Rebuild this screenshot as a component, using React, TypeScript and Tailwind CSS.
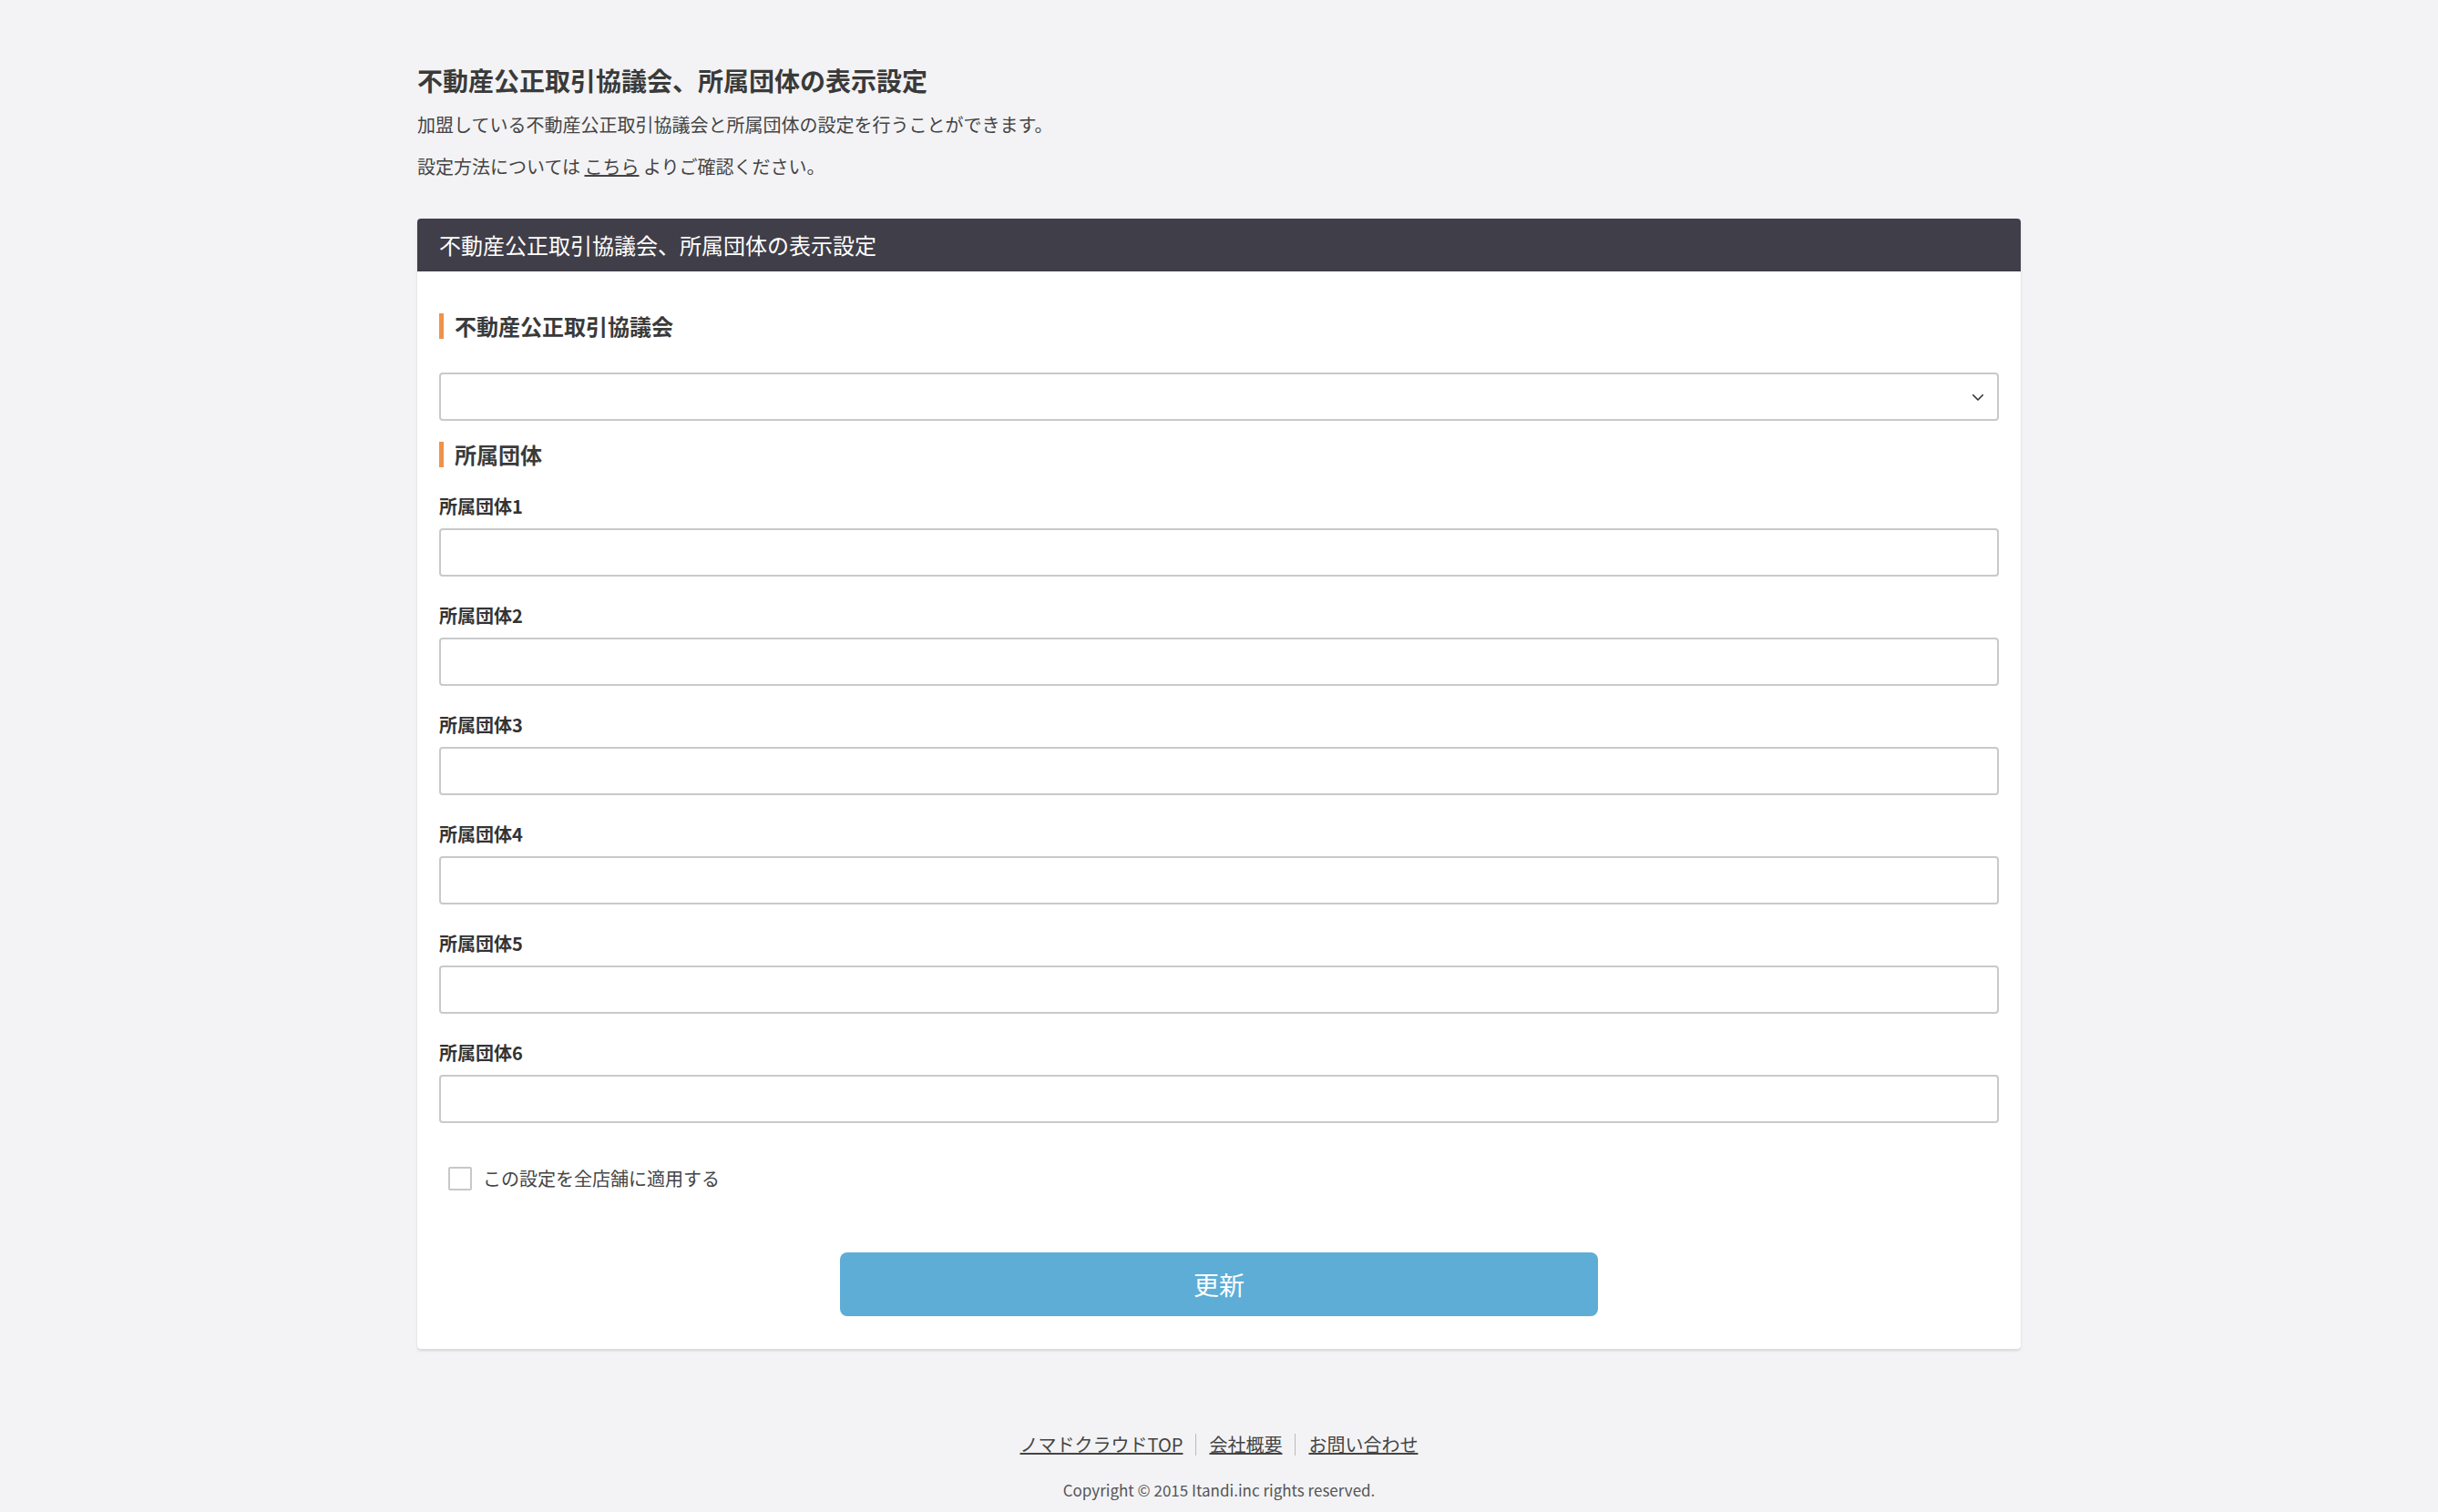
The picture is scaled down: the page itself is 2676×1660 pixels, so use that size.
const font = { fontFamily: '"Noto Sans CJK JP", "Noto Sans", sans-serif' }

function SectionHeading({ children }: { children: string }) {
  return (
    <div className="flex items-center gap-[12px] h-[30px]">
      <span className="w-[5px] h-[28px] bg-[#f0924a]" />
      <h3 className="text-[24px] font-bold text-[#3a3a3a] leading-none">{children}</h3>
    </div>
  )
}

export default function App() {
  const groups = [1, 2, 3, 4, 5, 6]
  return (
    <div className="min-h-[1660px] bg-[#f3f3f5] text-[#333]" style={font}>
      <div className="mx-auto w-[1760px] pt-[68px]">
        <h1 className="text-[28px] font-bold text-[#3a3a3a] leading-[40px]">
          不動産公正取引協議会、所属団体の表示設定
        </h1>
        <p className="mt-[14px] text-[20px] leading-[30px] text-[#444]">
          加盟している不動産公正取引協議会と所属団体の設定を行うことができます。
        </p>
        <p className="mt-[16px] text-[20px] leading-[30px] text-[#444]">
          設定方法については <a className="underline">こちら</a> よりご確認ください。
        </p>

        <div className="mt-[42px] rounded-[4px] bg-white shadow-[0_2px_3px_rgba(0,0,0,0.12)] overflow-hidden">
          <div className="h-[58px] bg-[#403e48] px-[24px] flex items-center text-[24px] text-white">
            不動産公正取引協議会、所属団体の表示設定
          </div>
          <div className="px-[24px] pt-[45px] pb-[36px]">
            <SectionHeading>不動産公正取引協議会</SectionHeading>
            <div className="mt-[36px] h-[53px] rounded-[4px] border-2 border-[#c9c9c9] flex items-center justify-end pr-[12px]">
              <svg width="18" height="18" viewBox="0 0 24 24" fill="none" stroke="#333" strokeWidth="2.2" strokeLinecap="round" strokeLinejoin="round">
                <path d="M5 9l7 7 7-7" />
              </svg>
            </div>
            <div className="mt-[22px]">
              <SectionHeading>所属団体</SectionHeading>
            </div>
            <div className="mt-[30px] flex flex-col gap-[31px]">
              {groups.map((n) => (
                <div key={n}>
                  <label className="block text-[20px] font-bold text-[#333] leading-[24px]">所属団体{n}</label>
                  <div className="mt-[12px] h-[53px] rounded-[4px] border-2 border-[#c9c9c9] bg-white" />
                </div>
              ))}
            </div>
            <label className="mt-[46px] ml-[10px] flex items-center gap-[12px] text-[20px] text-[#444]">
              <span className="w-[26px] h-[26px] border-2 border-[#c8c8c8] rounded-[2px] bg-white" />
              この設定を全店舗に適用する
            </label>
            <div className="mt-[66px] flex justify-center">
              <button className="w-[832px] h-[70px] rounded-[8px] bg-[#5eadd6] text-white text-[28px]">
                更新
              </button>
            </div>
          </div>
        </div>

        <div className="mt-[90px] flex justify-center items-center text-[20px] text-[#444]">
          <a className="underline px-[14px]">ノマドクラウドTOP</a>
          <span className="w-px h-[24px] bg-[#bbb]" />
          <a className="underline px-[14px]">会社概要</a>
          <span className="w-px h-[24px] bg-[#bbb]" />
          <a className="underline px-[14px]">お問い合わせ</a>
        </div>
        <p className="mt-[22px] text-center text-[17px] text-[#555] pb-[20px]">
          Copyright © 2015 Itandi.inc rights reserved.
        </p>
      </div>
    </div>
  )
}
